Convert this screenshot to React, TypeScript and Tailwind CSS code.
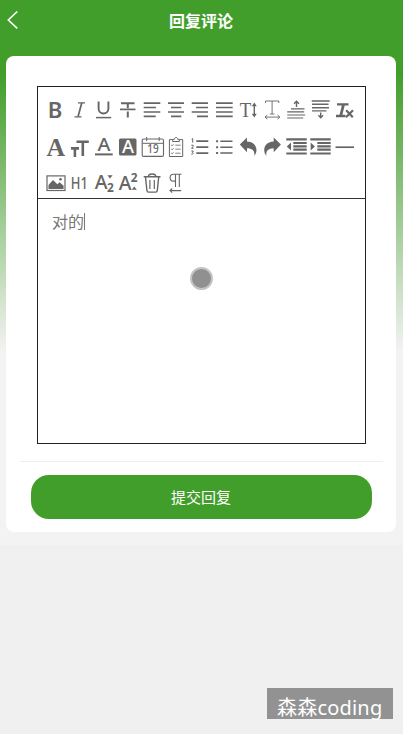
import type { ReactNode } from 'react';

const SANS = 'Noto Sans, sans-serif';
const SERIF = 'Liberation Serif, serif';
const INK = '#666';

type GlyphProps = {
  x: number;
  y: number;
  size: number;
  width: number;
  children: string;
  family?: string;
  weight?: number;
  fill?: string;
};

function Glyph({ x, y, size, width, children, family = SANS, weight = 500, fill = INK }: GlyphProps) {
  return (
    <text
      x={x}
      y={y}
      fontSize={size}
      textLength={width}
      lengthAdjust="spacingAndGlyphs"
      fontFamily={family}
      fontWeight={weight}
      fill={fill}
      stroke="none"
    >
      {children}
    </text>
  );
}

function Tool({ label, children }: { label: string; children: ReactNode }) {
  return (
    <button aria-label={label} className="h-6 w-6 shrink-0">
      <svg viewBox="0 0 24 24" className="block h-6 w-6 overflow-visible" fill="none" stroke={INK} strokeWidth="1.7">
        {children}
      </svg>
    </button>
  );
}

function Row({ className = '', children }: { className?: string; children: ReactNode }) {
  return <div className={`flex h-6 ${className}`}>{children}</div>;
}

function Toolbar() {
  return (
    <div className="h-[111.5px] border-b border-[#333] pt-[11px] pl-[5px]">
      <Row>
        <Tool label="bold"><Glyph x={4.8} y={19.5} size={21.5} width={14.6} weight={600}>B</Glyph></Tool>
        <Tool label="italic"><path d="M11 4.8h7M7.5 18.8h7" strokeWidth="1.2" /><path d="M14.8 4.8l-3.8 14" strokeWidth="1.7" /></Tool>
        <Tool label="underline"><path d="M7.6 3.6v7a4.9 4.9 0 0 0 9.8 0v-7" strokeWidth="1.9" /><path d="M5 19.6h15.2" strokeWidth="1.5" /></Tool>
        <Tool label="strike"><path d="M6 5.2h13.5M12.8 5.2v5M12.8 13.5v6" strokeWidth="2" /><path d="M5 11.4h15.5" strokeWidth="1.7" /></Tool>
        <Tool label="align left"><path d="M4.7 5.2h16.6M4.7 9.5h12.3M4.7 14h16.6M4.7 18.4h12" /></Tool>
        <Tool label="align center"><path d="M5 5.2h16M8 9.5h10.3M5 14h16M8 18.4h10.3" /></Tool>
        <Tool label="align right"><path d="M4.7 5.2H21M9 9.5h12M4.7 14H21M10 18.4h11" /></Tool>
        <Tool label="justify"><path d="M5 5.2h16.7M5 9.5h16.7M5 14h16.7M5 18.4h16.7" /></Tool>
        <Tool label="line height">
          <Glyph x={4.8} y={18.8} size={20.5} width={11.6} family={SERIF} weight={400}>T</Glyph>
          <path d="M19.3 6.5v11" strokeWidth="1.4" />
          <path d="M19.3 4.5l2.5 3.7h-5zM19.3 19.5l2.5-3.7h-5z" fill={INK} stroke="none" />
        </Tool>
        <Tool label="letter spacing">
          <path d="M6.5 5V3h13.3v2M13.1 3v13M10.8 16h4.6M6 19.1h14.8M8.3 17l-2.3 2.1 2.3 2.1M18.5 17l2.3 2.1-2.3 2.1" strokeWidth="0.9" />
        </Tool>
        <Tool label="space before">
          <path d="M8 10.8h13.5M4.2 13.9h17M4.2 17h18M4.2 20h16" strokeWidth="1.2" />
          <path d="M13.5 9V4M11 5.8l2.5-2.5L16 5.8" strokeWidth="1.4" />
        </Tool>
        <Tool label="space after">
          <path d="M4.7 3h18M5 6.3h16.5M5 9.7h17M5 12.9h14.5" strokeWidth="1.4" />
          <path d="M13.7 14.5v5M11.4 17.2l2.3 2.5 2.3-2.5" strokeWidth="1.4" />
        </Tool>
        <Tool label="clear format">
          <path d="M6 6.3h11.5M5 18h9.5" strokeWidth="2.3" />
          <path d="M12.5 6.5l-2.7 11" strokeWidth="2.8" />
          <path d="M15.2 12.2l6.6 7M22 12.2l-7 7" strokeWidth="2.2" />
        </Tool>
      </Row>
      <Row className="mt-[13px]">
        <Tool label="font"><Glyph x={3.4} y={21} size={25} width={18.6} family={SERIF} weight={700}>A</Glyph></Tool>
        <Tool label="font size"><path d="M9.5 6.8h12.3M15.8 6.8V21M4 13.4h8M7.9 13.4V22" strokeWidth="2.6" /></Tool>
        <Tool label="text color"><Glyph x={6.5} y={15.8} size={18} width={13}>A</Glyph><path d="M4 19.4h17.7" strokeWidth="2" /></Tool>
        <Tool label="background color">
          <rect x="4" y="3.4" width="17.5" height="17" rx="1.5" fill={INK} stroke="none" />
          <Glyph x={7} y={18} size={17.5} width={12} fill="#fff">A</Glyph>
        </Tool>
        <Tool label="date">
          <rect x="3.2" y="4" width="21.3" height="17.4" rx="1.5" strokeWidth="1.1" />
          <path d="M3.5 8.3h21M7.7 2v4M20.2 2v4" strokeWidth="1" />
          <Glyph x={8.2} y={18.4} size={12} width={11.5}>19</Glyph>
        </Tool>
        <Tool label="check list">
          <path d="M9.5 4.6H6.4v16.9h13.3V4.6h-3M9.7 6.5h6.7V4.3h-1.8c0-2.5-3-2.5-3.1 0H9.7z" strokeWidth="1" />
          <path d="M8.2 10l.9.9 1.5-1.7M8.2 14l.9.9 1.5-1.7M8.2 18l.9.9 1.5-1.7M12.3 10.2h5.3M12.3 14.2h5.3M12.3 18.2h5.3" strokeWidth="0.8" />
        </Tool>
        <Tool label="ordered list">
          <path d="M9.3 6.2h12M9.3 12.2h12M9.3 18.1h12" />
          <path d="M4.6 4.2l1.1-.6v4M4.3 10.2h1.8v1.5l-1.6 1.6h2M4.3 16h2l-1 1.5c1.5.3.9 2.1-1 1.7" strokeWidth="1" />
        </Tool>
        <Tool label="bullet list">
          <path d="M9.3 6.2h12.2M9.3 12.2h12.2M9.3 18.1h12.2" strokeWidth="1.5" />
          <path d="M5.1 6.2h2M5.1 12.2h2M5.1 18.1h2" strokeWidth="2" />
        </Tool>
        <Tool label="undo"><path d="M4.8 9.6L12 2.4v4.2c6.7.3 9.9 4.4 9.4 9.5-.2 2-1 3.6-2.1 4.9.8-5.1-1.9-7.7-7.3-7.8v4z" fill={INK} stroke="none" /></Tool>
        <Tool label="redo"><path d="M21.9 9.6l-7.2-7.2v4.2C8 6.9 4.8 11 5.3 16.1c.2 2 1 3.6 2.1 4.9-.8-5.1 1.9-7.7 7.3-7.8v4z" fill={INK} stroke="none" /></Tool>
        <Tool label="outdent"><path d="M3.3 4.4h20.4M10.3 8h13.4M10.3 11.4h13.4M10.3 14.7h13.4M3.3 18.5h20.4" strokeWidth="2.2" /><path d="M3.8 11.4l4.2-4v8z" fill={INK} stroke="none" /></Tool>
        <Tool label="indent"><path d="M3.3 4.4h20.4M10.3 8h13.4M10.3 11.4h13.4M10.3 14.7h13.4M3.3 18.5h20.4" strokeWidth="2.2" /><path d="M7.9 11.4l-4.2-4v8z" fill={INK} stroke="none" /></Tool>
        <Tool label="divider"><path d="M4.5 12.2h18.5" strokeWidth="1.7" /></Tool>
      </Row>
      <Row className="mt-3">
        <Tool label="image">
          <rect x="4" y="4.9" width="18" height="14.6" strokeWidth="1.2" />
          <path d="M5.5 18v-4l4.5-5 4.3 4.3 2.3-2 4 3.5V18z" fill={INK} stroke="none" />
          <circle cx="17.5" cy="8.3" r="1.3" fill={INK} stroke="none" />
        </Tool>
        <Tool label="heading"><Glyph x={3.8} y={17.5} size={16} width={17}>H1</Glyph></Tool>
        <Tool label="subscript">
          <Glyph x={3.8} y={17.8} size={20} width={12.8}>A</Glyph>
          <Glyph x={16} y={21} size={12} width={6.8} weight={700}>2</Glyph>
          <path d="M16.4 4.2h5.2L19 7.4z" fill={INK} stroke="none" />
        </Tool>
        <Tool label="superscript">
          <Glyph x={3.8} y={19} size={20} width={12.8}>A</Glyph>
          <Glyph x={15.8} y={10.8} size={12} width={6.8} weight={700}>2</Glyph>
          <path d="M16.8 18.8h5L19.3 15.6z" fill={INK} stroke="none" />
        </Tool>
        <Tool label="delete">
          <path d="M4.7 5.8h16.8M9.5 5.5c0-3.4 7.2-3.4 7.2 0M6.5 6l1.4 13.5c.1 1 .8 1.6 1.7 1.6h7c.9 0 1.6-.6 1.7-1.6L19.7 6" strokeWidth="1.4" />
          <path d="M10.9 9v9M15.3 9v9" strokeWidth="1.2" />
        </Tool>
        <Tool label="direction">
          <path d="M18.5 3.3h-8a3.4 3.4 0 0 0 0 6.8h2M12.5 3.3V16M16.3 3.3V16" strokeWidth="1.1" />
          <path d="M7 19.6h11.2M9.2 17.5L7 19.6l2.2 2.1" strokeWidth="1.1" />
        </Tool>
      </Row>
    </div>
  );
}

export default function App() {
  return (
    <div className="relative h-[734px] w-[403px] overflow-hidden bg-[#f0f0f0] font-['Noto_Sans','Noto_Sans_CJK_SC',sans-serif]">
      <div className="h-[545px] bg-[#f3f3f3] bg-[linear-gradient(180deg,#429e2b_0px,#429e2b_75px,#f3f3f3_352px)]">
        <header className="flex h-14 items-start px-1.5 pt-2">
          <button aria-label="back" className="h-6 w-6">
            <svg viewBox="0 0 24 24" className="block h-6 w-6" fill="none" stroke="#fff" strokeWidth="1.6">
              <path d="M11.3 3.5L2.3 12l9 8.3" />
            </svg>
          </button>
          <h1 className="mr-[25px] flex-1 text-center font-['Noto_Sans_CJK_SC',sans-serif] text-base leading-[24px] font-bold text-white">回复评论</h1>
        </header>
        <main className="ml-[6px] h-[476px] w-[390px] rounded-lg bg-white px-[14px] pt-[30px]">
          <section className="ml-[16.5px] h-[358px] w-[329px] border border-[#222]">
            <Toolbar />
            <div className="flex items-center pt-[13.5px] pl-[14.5px] font-['Noto_Sans_CJK_SC',sans-serif] text-base leading-[18px] text-[#777]">
              <span>对的</span>
              <span className="h-[17px] w-px bg-[#777]" />
            </div>
          </section>
          <div className="mt-[17px] h-px w-[363px] bg-[#eee]" />
          <button className="mt-[13px] ml-[10.5px] block h-11 w-[341px] rounded-[18px] bg-[#429e2b] font-['Noto_Sans_CJK_SC',sans-serif] text-[15px] leading-[44px] text-white">
            提交回复
          </button>
        </main>
      </div>
      <div className="absolute top-[266.5px] left-[190px] h-[23px] w-[23px] rounded-full border-2 border-[#c4c4c4] bg-[#909090]" />
      <div className="absolute top-[688px] left-[267px] h-[31px] w-[126px] bg-[#929292] pl-2.5 text-xl leading-[40px] tracking-[0.2px] whitespace-nowrap text-white">
        森森coding
      </div>
    </div>
  );
}
